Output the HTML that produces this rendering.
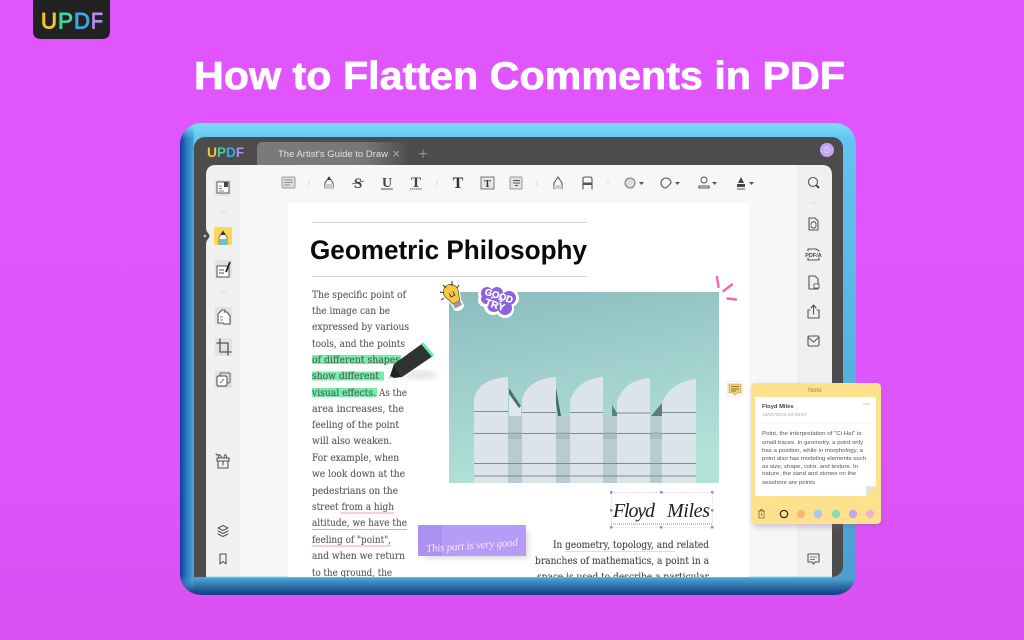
<!DOCTYPE html>
<html><head><meta charset="utf-8"><style>
html,body{margin:0;padding:0;width:1024px;height:640px;overflow:hidden;background:#df55fc}
svg{display:block;filter:blur(.35px)}
.b{font-family:"DejaVu Serif","Liberation Serif",serif;font-size:10px;fill:#5a5a5a;stroke:#5a5a5a;stroke-width:.12}
.n{font-family:"Liberation Sans",sans-serif;font-size:5.6px;fill:#555}
.i{fill:none;stroke:#555;stroke-width:1.1;stroke-linejoin:round;stroke-linecap:round}
.g{fill:#e2e2e2}
</style></head><body>
<svg width="1024" height="640" viewBox="0 0 1024 640" xmlns="http://www.w3.org/2000/svg">
<defs>
<linearGradient id="bg" x1="0" y1="0" x2="0" y2="1"><stop offset="0" stop-color="#e055ff"/><stop offset=".7" stop-color="#df55fc"/><stop offset="1" stop-color="#d94ff0"/></linearGradient>
<linearGradient id="fr" x1="0" y1="0" x2="0" y2="1"><stop offset="0" stop-color="#7cdcf8"/><stop offset=".035" stop-color="#62c4f0"/><stop offset=".966" stop-color="#4a9fd0"/><stop offset=".985" stop-color="#27659c"/><stop offset="1" stop-color="#123a88"/></linearGradient>
<linearGradient id="fl" x1="0" y1="0" x2="1" y2="0"><stop offset="0" stop-color="#123a9c"/><stop offset=".45" stop-color="#2a78c0"/><stop offset="1" stop-color="#4aa6d8"/></linearGradient>
<linearGradient id="flv" x1="0" y1="0" x2="0" y2="1"><stop offset="0" stop-color="#fff" stop-opacity="0"/><stop offset=".03" stop-color="#fff"/><stop offset=".97" stop-color="#fff"/><stop offset="1" stop-color="#fff" stop-opacity="0"/></linearGradient>
<mask id="flm"><rect x="180" y="125" width="14" height="465" fill="url(#flv)"/></mask>
<linearGradient id="tab" x1="0" y1="0" x2="1" y2="0"><stop offset="0" stop-color="#7b7b7b"/><stop offset=".7" stop-color="#777"/><stop offset="1" stop-color="#4d4d4d"/></linearGradient>
<linearGradient id="sky" x1="0" y1="0" x2=".25" y2="1"><stop offset="0" stop-color="#8bbcbd"/><stop offset=".5" stop-color="#a0cfcd"/><stop offset="1" stop-color="#b2e2d6"/></linearGradient>
<clipPath id="page"><rect x="206" y="165" width="626" height="412"/></clipPath>
<clipPath id="img"><rect x="449" y="292" width="270" height="191"/></clipPath>
<clipPath id="outer"><rect x="180" y="123" width="676" height="472" rx="21"/></clipPath>
<filter id="sh"><feGaussianBlur stdDeviation="3"/></filter>
</defs>
<rect width="1024" height="640" fill="url(#bg)"/>

<!-- top logo -->
<path d="M33 0H110V31Q110 39 102 39H41Q33 39 33 31Z" fill="#222"/>
<g font-family="Liberation Sans,sans-serif" font-size="22.500" stroke-width=".9" stroke-linejoin="round">
<text x="41" y="28.500" fill="#f5c52f" stroke="#f5c52f" textLength="16" lengthAdjust="spacingAndGlyphs">U</text>
<text x="58" y="28.500" fill="#46d29b" stroke="#46d29b" textLength="15" lengthAdjust="spacingAndGlyphs">P</text>
<text x="74" y="28.500" fill="#3fa8e0" stroke="#3fa8e0" textLength="16" lengthAdjust="spacingAndGlyphs">D</text>
<text x="91" y="28.500" fill="#b68fe8" stroke="#b68fe8" textLength="12" lengthAdjust="spacingAndGlyphs">F</text>
</g>

<!-- title -->
<text x="194" y="89" font-family="Liberation Sans,sans-serif" font-weight="bold" font-size="39" fill="#fff" stroke="#fff" stroke-width=".7" textLength="651" lengthAdjust="spacingAndGlyphs">How to Flatten Comments in PDF</text>

<!-- frame -->
<rect x="180" y="123" width="676" height="472" rx="21" fill="url(#fr)"/>
<g clip-path="url(#outer)"><rect x="180" y="125" width="14" height="465" fill="url(#fl)" mask="url(#flm)"/></g>
<rect x="194" y="137" width="649" height="440" rx="11" fill="#4c4c4c"/>
<rect x="194" y="565" width="20" height="12" fill="#4c4c4c"/>
<path d="M216 165H822Q832 165 832 175V577H206V175Q206 165 216 165Z" fill="#f0f0f0"/>
<rect x="240" y="165" width="557" height="412" fill="#f7f7f7"/>
<path d="M206 577H832" stroke="#8fd6ea" stroke-width="1"/>

<!-- title bar -->
<g font-family="Liberation Sans,sans-serif" font-size="13.5" font-weight="bold">
<text x="207" y="157" fill="#f5c52f" textLength="10" lengthAdjust="spacingAndGlyphs">U</text>
<text x="217" y="157" fill="#46d29b" textLength="9" lengthAdjust="spacingAndGlyphs">P</text>
<text x="226" y="157" fill="#3fa8e0" textLength="10" lengthAdjust="spacingAndGlyphs">D</text>
<text x="236" y="157" fill="#b68fe8" textLength="8" lengthAdjust="spacingAndGlyphs">F</text>
</g>
<path d="M257 165V148Q257 142 263 142H410V165Z" fill="url(#tab)"/>
<text x="278" y="157" font-family="Liberation Sans,sans-serif" font-size="9" fill="#e2e2e2" textLength="110" lengthAdjust="spacingAndGlyphs">The Artist's Guide to Draw</text>
<path d="M393.500 151L399 156.500M399 151L393.500 156.500" stroke="#aaa" stroke-width="1"/>
<path d="M423 149.500V158M418.800 153.800H427.200" stroke="#999" stroke-width="1"/>
<circle cx="827" cy="150" r="7" fill="#c3a6f2"/>
<text x="827" y="153" font-family="Liberation Sans,sans-serif" font-size="8" fill="#e6d9fb" text-anchor="middle">D</text>

<!-- left notch -->
<path d="M206 227Q206 231 208 233Q211 236 208 239Q206 241 206 245Z" fill="#4c4c4c"/>
<circle cx="205" cy="236" r="1.300" fill="#e8c46a"/>

<!-- toolbar -->
<g>
<rect x="282" y="177" width="13" height="11" rx="1.500" fill="#ddd" stroke="#999"/><path d="M284.500 180H292.500M284.500 182.500H292.500M284.500 185H290" stroke="#777" stroke-width=".8"/>
<path d="M309 180V186M437 180V186M537 180V186M608 180V186" stroke="#ddd"/>
<path class="i" d="M325 188V183L329 177L333 183V188"/><path d="M325 184H333V189H325Z" fill="#ccc"/><path d="M327.500 180L329 177L330.500 180Z" fill="#333"/>
<text x="358" y="188" font-family="Liberation Serif,serif" font-weight="bold" font-size="15" fill="#444" text-anchor="middle">S</text><path d="M352 184L364 181" stroke="#444" stroke-width=".8"/>
<text x="387" y="187" font-family="Liberation Serif,serif" font-weight="bold" font-size="14" fill="#444" text-anchor="middle">U</text><path d="M381 189H393" stroke="#555"/>
<text x="416" y="187" font-family="Liberation Serif,serif" font-weight="bold" font-size="15" fill="#444" text-anchor="middle">T</text><path d="M410 189H422" stroke="#555" stroke-dasharray="1.500 .5"/>
<text x="458" y="188" font-family="Liberation Serif,serif" font-weight="bold" font-size="16" fill="#333" text-anchor="middle">T</text>
<rect x="481" y="177" width="13" height="12" fill="#e6e6e6" stroke="#777"/><text x="487.500" y="187" font-family="Liberation Serif,serif" font-weight="bold" font-size="10" fill="#333" text-anchor="middle">T</text>
<rect x="510" y="177" width="12" height="12" rx="1" fill="#e2e2e2" stroke="#999"/><path d="M513 180.500H520M513 183H520M515 185.500H518" stroke="#555" stroke-width=".9"/>
<path class="i" d="M554 189V183L558 177L562 183V189"/><path d="M554 185H562V189H554Z" fill="#ccc"/>
<path class="i" d="M583 189V179Q583 177 585 177H590Q592 177 592 179V189M583 183H592"/><rect x="583" y="183" width="9" height="2" fill="#555"/>
<circle cx="630" cy="183" r="5" fill="#ddd" stroke="#777"/><path d="M639 182H644L641.500 185Z" fill="#555"/>
<path class="i" d="M671 183A5 5 0 1 0 666 188L671 183Z"/><path d="M675 182H680L677.500 185Z" fill="#555"/>
<circle cx="704" cy="180" r="3" fill="none" stroke="#555"/><path class="i" d="M699 186H709V188H699Z"/><path d="M712 182H717L714.500 185Z" fill="#555"/>
<path d="M741 177L744 183H738Z M737 184H745V187H737Z" fill="#444"/><path d="M737 189H745" stroke="#555"/><path d="M749 182H754L751.500 185Z" fill="#555"/>
</g>

<!-- left sidebar -->
<g>
<rect x="215" y="180" width="16" height="16" rx="2" class="g"/><path d="M217 182H229V193H217Z" fill="#fff" stroke="#555"/><rect x="224" y="182" width="4" height="5" fill="#444"/><path d="M219 186H222M219 188.500H222M219 191H224" stroke="#555" stroke-width=".8"/>
<path d="M220 212H226M220 292H226" stroke="#ddd"/>
<rect x="214" y="227" width="18" height="18" rx="1.500" fill="#fbd758"/><path d="M219 244V237L223 231L227 237V244Z" fill="#fff" stroke="#555" stroke-width=".7"/><path d="M220.500 235L223 231L225.500 235Z" fill="#333"/><path d="M219 239H227V245H219Z" fill="#6fc3bf"/>
<rect x="215" y="260" width="17" height="18" rx="2" class="g"/><path d="M217 266H229V277H217Z" fill="#fff" stroke="#555"/><path d="M219 270H224M219 273H224" stroke="#555"/><path d="M226 272L230 262" stroke="#222" stroke-width="1.800"/>
<rect x="215" y="307" width="17" height="18" rx="2" class="g"/><path class="i" d="M218 314L222 310H225V323H218Z" style="fill:#fff"/><path class="i" d="M224 312H227L230 316V324H224" style="fill:#fff"/><path d="M220 317H223M220 320H223" stroke="#555" stroke-width=".8"/>
<rect x="215" y="338" width="17" height="18" rx="2" class="g"/><path class="i" d="M220 339V352H231M217 343H228V355" style="stroke-width:1.300"/>
<rect x="215" y="371" width="17" height="17" rx="2" class="g"/><rect x="220" y="373" width="10" height="10" rx="1.500" fill="none" stroke="#666"/><rect x="217" y="376" width="10" height="10" rx="1.500" fill="#fff" stroke="#444"/><path d="M220 383L224 379" stroke="#777"/>
<path class="i" d="M217 458H229V461H217ZM218 461V468H228V461M223 461V465"/><path class="i" d="M219 458Q217 454 220 455L222 458M224 458Q224 454 226 455L227 458M216 454L217.500 455"/>
<path class="i" d="M218 528L223 525.500L228 528L223 530.500Z"/><path class="i" d="M218 531L223 533.500L228 531M218 534L223 536.500L228 534"/>
<path class="i" d="M220 554H226V564L223 561.500L220 564Z"/>
</g>

<!-- right sidebar -->
<g>
<circle cx="813" cy="182" r="4.500" class="i"/><path d="M816.500 185.500L819 188" stroke="#333" stroke-width="1.800"/>
<path d="M810 203H817" stroke="#ddd"/>
<path class="i" d="M809 218H815L818 221V230H809Z"/><path class="i" d="M811 224.500A2.500 2.500 0 0 1 816 224M816 225A2.500 2.500 0 0 1 811 226"/>
<path class="i" d="M808 251V249H816L819 251M808 258V260H819V258"/><text x="813.500" y="257" font-family="Liberation Sans,sans-serif" font-weight="bold" font-size="5.500" fill="#444" text-anchor="middle">PDF/A</text>
<path class="i" d="M809 276H815L818 279V289H809Z"/><rect x="814" y="284" width="5" height="4" fill="#fff" stroke="#555" stroke-width=".9"/>
<path class="i" d="M810 310H808V318H819V310H817M813.500 314V305M811 308L813.500 305L816 308"/>
<rect x="808" y="336" width="11" height="10" rx="1.500" class="i"/><path class="i" d="M809 338L813.500 342L818 338"/>
<path class="i" d="M808 554H819V562H815L813.500 564L812 562H808Z"/><path d="M810 557H817M810 559.500H815" stroke="#555" stroke-width=".8"/>
</g>

<g clip-path="url(#page)">
<!-- page -->
<path d="M290 203H747Q749 203 749 205V577H288V205Q288 203 290 203Z" fill="#fff"/>
<path d="M312 222.500H587M312 276.500H587" stroke="#d6d6d6" stroke-width="1"/>
<text x="310" y="259" font-family="Liberation Sans,sans-serif" font-weight="bold" font-size="27" fill="#0a0a0a" textLength="277" lengthAdjust="spacingAndGlyphs">Geometric Philosophy</text>

<!-- highlights -->
<rect x="312" y="355" width="89" height="9" fill="#70f0a8"/>
<rect x="312" y="371.500" width="72" height="9" fill="#70f0a8"/>
<rect x="312" y="388" width="65" height="9" fill="#70f0a8"/>

<!-- left column -->
<g class="b">
<text x="312" y="298" textLength="94" lengthAdjust="spacingAndGlyphs">The specific point of</text>
<text x="312" y="314" textLength="78" lengthAdjust="spacingAndGlyphs">the image can be</text>
<text x="312" y="330" textLength="97" lengthAdjust="spacingAndGlyphs">expressed by various</text>
<text x="312" y="347" textLength="93" lengthAdjust="spacingAndGlyphs">tools, and the points</text>
<text x="312" y="363" textLength="88" lengthAdjust="spacingAndGlyphs">of different shapes</text>
<text x="312" y="379" textLength="67" lengthAdjust="spacingAndGlyphs">show different</text>
<text x="312" y="396" textLength="64" lengthAdjust="spacingAndGlyphs">visual effects.</text>
<text x="379" y="396" textLength="28" lengthAdjust="spacingAndGlyphs">As the</text>
<text x="312" y="412" textLength="92" lengthAdjust="spacingAndGlyphs">area increases, the</text>
<text x="312" y="428" textLength="87" lengthAdjust="spacingAndGlyphs">feeling of the point</text>
<text x="312" y="444" textLength="80" lengthAdjust="spacingAndGlyphs">will also weaken.</text>
<text x="312" y="461" textLength="87" lengthAdjust="spacingAndGlyphs">For example, when</text>
<text x="312" y="477" textLength="93" lengthAdjust="spacingAndGlyphs">we look down at the</text>
<text x="312" y="494" textLength="86" lengthAdjust="spacingAndGlyphs">pedestrians on the</text>
<text x="312" y="510" textLength="82" lengthAdjust="spacingAndGlyphs">street from a high</text>
<text x="312" y="526" textLength="95" lengthAdjust="spacingAndGlyphs">altitude, we have the</text>
<text x="312" y="543" textLength="79" lengthAdjust="spacingAndGlyphs">feeling of "point",</text>
<text x="312" y="559" textLength="93" lengthAdjust="spacingAndGlyphs">and when we return</text>
<text x="312" y="576" textLength="80" lengthAdjust="spacingAndGlyphs">to the ground, the</text>
</g>
<path d="M340 513H394M312 529.500H407M312 546H391" stroke="#f4a0a8" stroke-width="1"/>

<!-- right column -->
<g class="b" style="fill:#444;stroke:#444">
<text x="553" y="548" textLength="156" lengthAdjust="spacingAndGlyphs">In geometry, topology, and related</text>
<text x="535" y="564" textLength="174" lengthAdjust="spacingAndGlyphs">branches of mathematics, a point in a</text>
<text x="537" y="580" textLength="172" lengthAdjust="spacingAndGlyphs">space is used to describe a particular</text>
</g>
<path d="M565 551.500H675" stroke="#f6df9a" stroke-width="1"/>

<!-- image -->
<g clip-path="url(#img)">
<rect x="449" y="292" width="270" height="191" fill="url(#sky)"/>
<rect x="508" y="416" width="162" height="67" fill="#b7cbd1"/>
<path d="M509 388L521 406V416H509Z" fill="#dfe8ea"/><path d="M509 388L521 406L519 408L509 394Z" fill="#4d6c74"/>
<path d="M556 388L561 416H558L555 395Z" fill="#46666e"/>
<path d="M612 405L617 413V416H612Z" fill="#5d7c84"/>
<path d="M651 416L662 403V416Z" fill="#5d7c84"/>
<g fill="#dbe4e9">
<path d="M474 483V400C476 385 490 378 508 377V483Z"/>
<path d="M522 483V400C525 386 538 378 556 377V483Z"/>
<path d="M570 483V402C573 388 586 378 603 377V483Z"/>
<path d="M617 483V403C620 389 632 379 650 378V483Z"/>
<path d="M662 483V404C665 391 678 381 696 379V483Z"/>
</g>
<path d="M474 411.500H508M522 412.500H556M570 412.500H603M617 413H650M662 412.500H696M474 433.500H696M474 463.500H696M474 476H696" stroke="#7c8d94" stroke-width=".9"/>
<path d="M508 432H522V439H508ZM556 432H570V439H556ZM603 432H617V439H603ZM650 432H662V439H650Z" fill="#a3b6bd" opacity=".7"/>
</g>

<!-- bulb -->
<g transform="rotate(-28 453 296)">
<path d="M446 294A7.500 7.500 0 1 1 460 294L457 303V309Q453 312 449 309V303Z" fill="#fff" stroke="#fff" stroke-width="3"/>
<path d="M446 294A7.500 7.500 0 1 1 460 294Q458 299 457 303H449Q448 299 446 294Z" fill="#f8c843" stroke="#333" stroke-width=".6"/>
<path d="M449 303H457V308H449Z" fill="#9a9a9a"/>
<path d="M451 292V296H455V292" fill="none" stroke="#444" stroke-width="1"/>
</g>
<path d="M440 292L444 293M443 285L446 288M452 281L452 286M459 285L457 288M441 300L444 298" stroke="#333" stroke-width="1"/>

<!-- good try sticker -->
<g fill="#fff">
<circle cx="486" cy="293" r="8"/><circle cx="497" cy="292" r="8"/><circle cx="510" cy="298" r="9"/><circle cx="505" cy="309" r="9"/><circle cx="493" cy="306" r="9"/><circle cx="485" cy="300" r="7"/>
</g>
<g fill="#8c63dc">
<circle cx="487" cy="293" r="6"/><circle cx="497" cy="293" r="6"/><circle cx="509" cy="298" r="7"/><circle cx="505" cy="308" r="7"/><circle cx="494" cy="305" r="7"/><circle cx="486" cy="299" r="5"/>
</g>
<g transform="rotate(18 498 302)" font-family="Liberation Sans,sans-serif" font-weight="bold" fill="#fff" stroke="#fff" stroke-width=".3" text-anchor="middle">
<text x="497" y="299" font-size="9.500" textLength="29" lengthAdjust="spacing">GOOD</text>
<text x="496" y="309" font-size="10" textLength="20" lengthAdjust="spacing">TRY</text>
</g>

<!-- pink ticks -->
<path d="M717 277L718.500 287M723.500 291L732 284.500M727.500 298.500L736 299.500" stroke="#f266ac" stroke-width="2.400" stroke-linecap="round"/>

<!-- marker -->
<ellipse cx="420" cy="375" rx="18" ry="5" fill="#e6e6e6" filter="url(#sh)"/>
<path d="M423 343L433 356L402 377L394 364Z" fill="#2f3331"/>
<path d="M423 342L434 355L432 357L421 344Z" fill="#5df0a0"/>
<path d="M394 364L402 377L394 378L390 376Z" fill="#222"/>
<path d="M390 376L392 378L388 378Z" fill="#5df0a0"/>

<!-- note marker -->
<rect x="727.500" y="381.500" width="15" height="15" fill="#fff" stroke="#f0b8c8" stroke-width=".6" stroke-dasharray="1 1"/>
<path d="M729 384H741V393H737L735 395L733 393H729Z" fill="#f4d16a" stroke="#a98f4c" stroke-width=".6"/>
<path d="M731 386.500H739M731 389H739M731 391H736" stroke="#6b5b2c" stroke-width=".7"/>

<!-- sticky -->
<rect x="424" y="531" width="104" height="27" fill="#777" opacity=".3" filter="url(#sh)"/>
<rect x="418" y="525" width="108" height="31" fill="#b79cf7"/>
<rect x="418" y="525" width="24" height="31" fill="#ad91f0"/>
<text x="426" y="549" font-family="Liberation Serif,serif" font-style="italic" font-size="11" fill="#efe8ff" textLength="92" lengthAdjust="spacing" transform="rotate(-4 472 545)">This part is very good</text>

<!-- signature -->
<rect x="611.500" y="492.500" width="101" height="35" fill="none" stroke="#b8a8ee" stroke-width=".7" stroke-dasharray="1 2"/>
<path d="M611 524H712" stroke="#666" stroke-width=".8" stroke-dasharray="1 1"/>
<g fill="#9a85e8"><rect x="610" y="491" width="2.500" height="2.500"/><rect x="660" y="491" width="2.500" height="2.500"/><rect x="711" y="491" width="2.500" height="2.500"/><rect x="610" y="509" width="2.500" height="2.500"/><rect x="711" y="509" width="2.500" height="2.500"/><rect x="610" y="526" width="2.500" height="2.500"/><rect x="660" y="526" width="2.500" height="2.500"/><rect x="711" y="526" width="2.500" height="2.500"/></g>
<text x="613" y="517" font-family="Liberation Serif,serif" font-style="italic" font-size="20" fill="#222" textLength="42" lengthAdjust="spacing">Floyd</text>
<text x="667" y="517" font-family="Liberation Serif,serif" font-style="italic" font-size="20" fill="#222" textLength="43" lengthAdjust="spacing">Miles</text>
</g>

<!-- note panel -->
<rect x="753" y="386" width="128" height="141" rx="4" fill="#8a5f8a" opacity=".35" filter="url(#sh)"/>
<rect x="751" y="383" width="130" height="141" rx="4" fill="#fde18d"/>
<text x="815" y="392" font-family="Liberation Sans,sans-serif" font-size="6.500" fill="#9a8a5c" text-anchor="middle">Note</text>
<path d="M755 397H876V486L866 496H755Z" fill="#fff"/>
<path d="M866 496V486H876Z" fill="#e2e2e2"/>
<text x="762" y="408" font-family="Liberation Sans,sans-serif" font-weight="bold" font-size="5.800" fill="#444">Floyd Miles</text>
<text x="762" y="416" font-family="Liberation Sans,sans-serif" font-size="4.800" fill="#aaa" textLength="45" lengthAdjust="spacingAndGlyphs">18/07/2022 20:46:07</text>
<rect x="863" y="403" width="7" height="2" fill="#e6e6e6"/>
<path d="M760 423H872" stroke="#f2f2f2"/>
<g class="n">
<text x="762" y="435" textLength="101" lengthAdjust="spacingAndGlyphs">Point, the interpretation of "Ci Hai" is:</text>
<text x="762" y="444" textLength="101" lengthAdjust="spacingAndGlyphs">small traces. In geometry, a point only</text>
<text x="762" y="452" textLength="101" lengthAdjust="spacingAndGlyphs">has a position, while in morphology, a</text>
<text x="762" y="460" textLength="104" lengthAdjust="spacingAndGlyphs">point also has modeling elements such</text>
<text x="762" y="468" textLength="96" lengthAdjust="spacingAndGlyphs">as size, shape, color, and texture. In</text>
<text x="762" y="475" textLength="94" lengthAdjust="spacingAndGlyphs">nature, the sand and stones on the</text>
<text x="762" y="484" textLength="53" lengthAdjust="spacingAndGlyphs">seashore are points</text>
</g>
<path d="M758 511H765M759 511V518H764V511M760.500 511V509.500H762.500V511M761.500 513V516" fill="none" stroke="#776a3a" stroke-width=".8"/>
<circle cx="784" cy="514" r="3.700" fill="none" stroke="#222" stroke-width="1.200"/>
<circle cx="801" cy="514" r="4.200" fill="#f6b879"/>
<circle cx="818" cy="514" r="4.200" fill="#a9c9f2"/>
<circle cx="836" cy="514" r="4.200" fill="#8cd8b4"/>
<circle cx="853" cy="514" r="4.200" fill="#c4a8e6"/>
<circle cx="870" cy="514" r="4.200" fill="#f4b2d0"/>
</svg>
</body></html>
